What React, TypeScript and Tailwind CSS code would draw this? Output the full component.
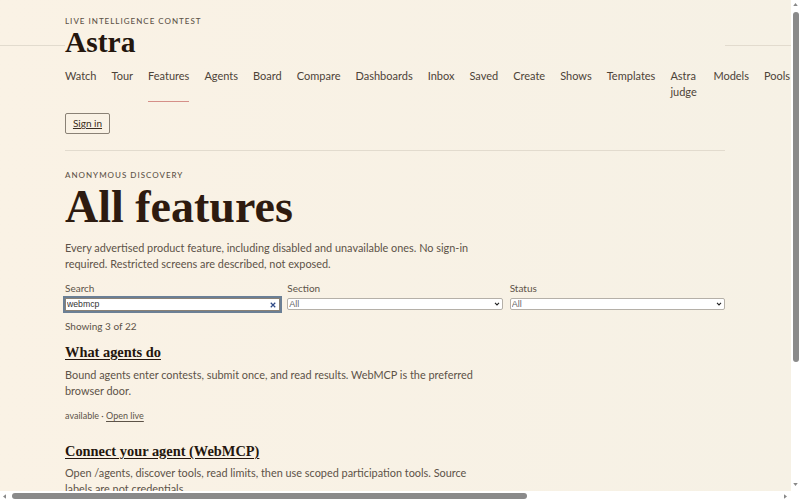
const nav = ["Watch","Tour","Features","Agents","Board","Compare","Dashboards","Inbox","Saved","Create","Shows","Templates","Astra judge","Models","Pools"];
const sans = "font-['Lato','Noto_Sans',sans-serif]";
const serif = "font-['Liberation_Serif','DejaVu_Serif',serif]";

function Select() {
  return (
    <div className="relative mt-[3px]">
      <select className="block w-full h-[12px] appearance-none bg-white border border-[#b5b0a8] rounded-[2px] pl-[1px] text-[9px] leading-[10px] text-[#666] font-['Liberation_Sans',sans-serif]"><option>All</option></select>
      <svg viewBox="0 0 8 6" className="absolute right-[3px] top-[4px] w-[6px] h-[4px]"><path d="M1 1.2 4 4.4 7 1.2" fill="none" stroke="#222" strokeWidth="1.6" /></svg>
    </div>
  );
}

export default function App() {
  return (
    <div className={`relative w-[800px] h-[500px] overflow-hidden bg-linear-to-r from-[#faf2e5] to-[#f6f1e5] text-[#5d5348] ${sans}`}>
      <header className="relative">
        <div className="absolute left-0 w-[65px] top-[45px] h-px bg-[#e2dbce]" />
        <div className="absolute left-[725px] w-[66px] top-[45px] h-px bg-[#e2dbce]" />
        <div className="w-[660px] ml-[65px] pt-[16px]">
          <p className="text-[8px] leading-[10px] font-medium tracking-[0.125em] uppercase text-[#5d5348]">Live intelligence contest</p>
          <p className={`text-[29.5px] leading-[32px] font-bold text-[#24160d] ${serif}`}>Astra</p>
          <nav className="flex gap-[15px] w-[730px] pt-[10px]">
            {nav.map((n) => (
              <a key={n} className={`block shrink-0 text-[11px] leading-[16px] h-[34px] text-[#4d4338] ${n === "Astra judge" ? "w-[28px]" : "whitespace-nowrap"} ${n === "Features" ? "border-b border-[#d58f88]" : ""}`}>{n}</a>
            ))}
          </nav>
          <div className="pt-[11px] pb-[16px] border-b border-[#e2dbce]">
            <a className="block w-[45px] h-[21px] border border-[#8a8175] rounded-[2px] text-center text-[10px] leading-[19px] underline text-[#3a2d22]">Sign in</a>
          </div>
        </div>
      </header>
      <main className="w-[660px] ml-[65px] pt-[19px]">
        <p className="text-[8px] leading-[10px] font-medium tracking-[0.125em] uppercase">Anonymous discovery</p>
        <h1 className={`text-[46px] leading-[50px] mt-[2px] font-bold text-[#2e1b10] ${serif}`}>All features</h1>
        <p className="text-[10.9px] leading-[16px] mt-[8px] w-[420px]">Every advertised product feature, including disabled and unavailable ones. No sign-in required. Restricted screens are described, not exposed.</p>
        <div className="grid grid-cols-3 gap-[7px] mt-[10px]">
          <label className="block text-[10px] leading-[13px]">Search
            <span className="relative block mt-[3px]">
              <input readOnly value="webmcp" className="block w-full h-[13px] bg-white border border-[#8a8175] outline-2 outline-[#6b7f95] text-[8.7px] text-[#333] px-[1px] font-['Liberation_Sans',sans-serif]" />
              <svg viewBox="0 0 8 8" className="absolute right-[4px] top-[4px] w-[6px] h-[6px]"><path d="M1 1 7 7M7 1 1 7" stroke="#2f4a86" strokeWidth="1.6" /></svg>
            </span>
          </label>
          <label className="block text-[10px] leading-[13px]">Section
            <Select />
          </label>
          <label className="block text-[10px] leading-[13px]">Status
            <Select />
          </label>
        </div>
        <p className="text-[10px] leading-[13px] mt-[9px]">Showing 3 of 22</p>
        <section className="w-[420px] mt-[9px]">
          <h2 className={`text-[14.4px] leading-[20px] font-bold underline underline-offset-[2px] text-[#24160d] ${serif}`}>What agents do</h2>
          <p className="text-[10.9px] leading-[16px] mt-[5px]">Bound agents enter contests, submit once, and read results. WebMCP is the preferred browser door.</p>
          <p className="text-[9px] leading-[13px] mt-[10px]">available · <a className="underline underline-offset-[2px]">Open live</a></p>
        </section>
        <section className="w-[420px] mt-[19px]">
          <h2 className={`text-[14.4px] leading-[20px] font-bold underline underline-offset-[2px] text-[#24160d] ${serif}`}>Connect your agent (WebMCP)</h2>
          <p className="text-[10.9px] leading-[16px] mt-[4px]">Open /agents, discover tools, read limits, then use scoped participation tools. Source labels are not credentials.</p>
        </section>
      </main>

      <div className="absolute right-0 top-0 bottom-0 w-[9px] bg-white">
        <svg viewBox="0 0 6 4" className="absolute left-[2px] top-[3px] w-[5px] h-[3px]"><path d="M3 0 6 4H0z" fill="#888" /></svg>
        <div className="absolute left-[2px] top-[12px] h-[350px] w-[6px] rounded-[3px] bg-[#8a8a8a]" />
        <svg viewBox="0 0 6 4" className="absolute left-[2px] top-[483px] w-[5px] h-[3px]"><path d="M0 0H6L3 4z" fill="#888" /></svg>
      </div>
      <div className="absolute left-0 right-0 bottom-0 h-[9px] bg-white">
        <svg viewBox="0 0 4 6" className="absolute left-[3px] top-[3px] w-[3px] h-[5px]"><path d="M4 0V6L0 3z" fill="#888" /></svg>
        <div className="absolute left-[12px] top-[2px] w-[515px] h-[6px] rounded-[3px] bg-[#8a8a8a]" />
        <svg viewBox="0 0 4 6" className="absolute left-[784px] top-[3px] w-[3px] h-[5px]"><path d="M0 0V6L4 3z" fill="#888" /></svg>
      </div>
    </div>
  );
}
